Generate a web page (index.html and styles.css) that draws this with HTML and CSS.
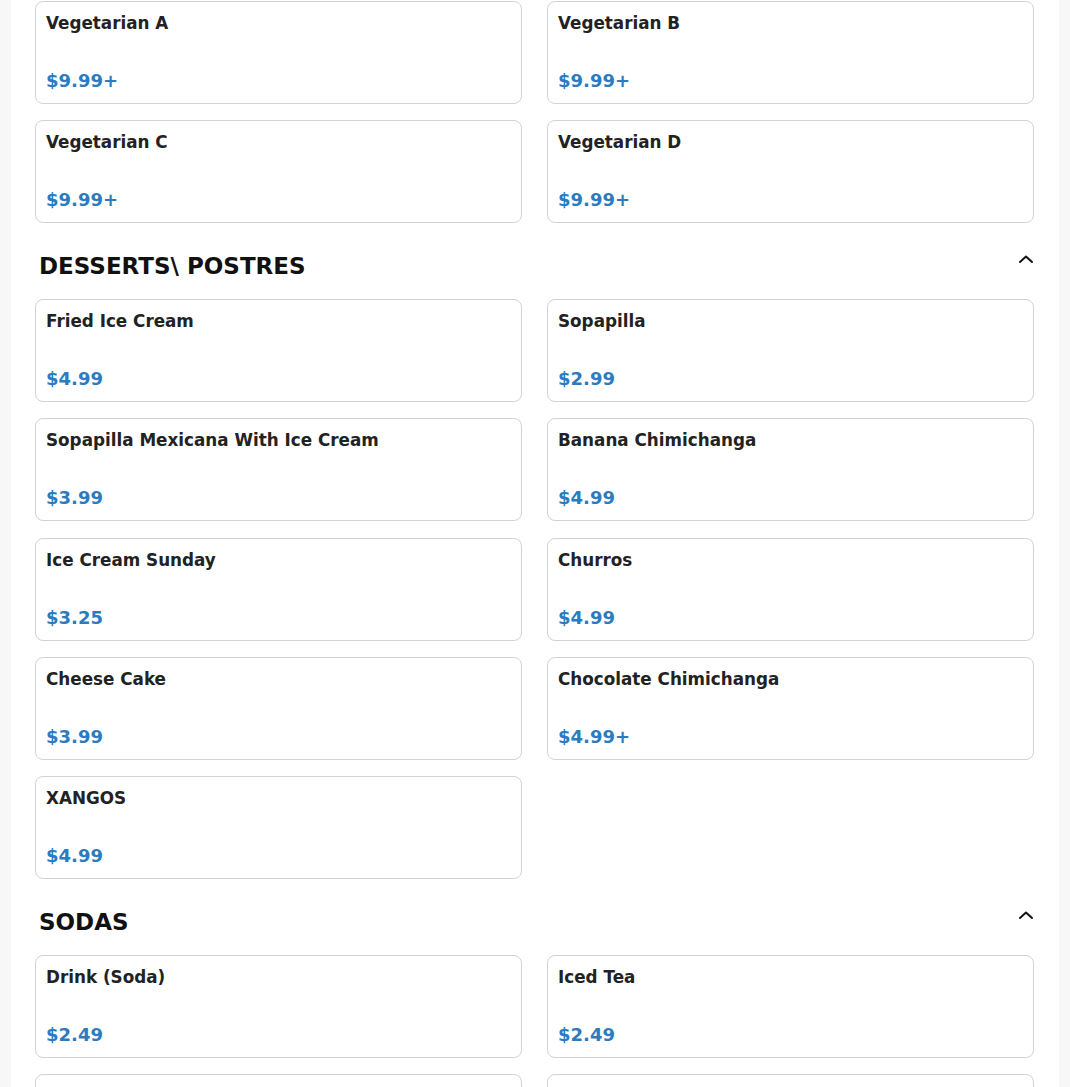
FILE: index.html
```html
<!DOCTYPE html>
<html lang="en">
<head>
<meta charset="utf-8">
<title>Menu</title>
<link rel="stylesheet" href="styles.css">
</head>
<body>
<main class="menu">
  <div class="grid first-grid">
    <div class="card"><div class="title">Vegetarian A</div><div class="price">$9.99+</div></div>
    <div class="card"><div class="title">Vegetarian B</div><div class="price">$9.99+</div></div>
    <div class="card"><div class="title">Vegetarian C</div><div class="price">$9.99+</div></div>
    <div class="card"><div class="title">Vegetarian D</div><div class="price">$9.99+</div></div>
  </div>

  <section class="section">
    <div class="section-head">
      <h2 class="section-title">DESSERTS\ POSTRES</h2>
      <svg class="chevron" width="16" height="12" viewBox="0 0 16 12"><path d="M2 9 L8 3.5 L14 9" fill="none" stroke="#111" stroke-width="2" stroke-linecap="round" stroke-linejoin="round"/></svg>
    </div>
    <div class="grid">
      <div class="card"><div class="title">Fried Ice Cream</div><div class="price">$4.99</div></div>
      <div class="card"><div class="title">Sopapilla</div><div class="price">$2.99</div></div>
      <div class="card"><div class="title">Sopapilla Mexicana With Ice Cream</div><div class="price">$3.99</div></div>
      <div class="card"><div class="title">Banana Chimichanga</div><div class="price">$4.99</div></div>
      <div class="card"><div class="title">Ice Cream Sunday</div><div class="price">$3.25</div></div>
      <div class="card"><div class="title">Churros</div><div class="price">$4.99</div></div>
      <div class="card"><div class="title">Cheese Cake</div><div class="price">$3.99</div></div>
      <div class="card"><div class="title">Chocolate Chimichanga</div><div class="price">$4.99+</div></div>
      <div class="card"><div class="title">XANGOS</div><div class="price">$4.99</div></div>
    </div>
  </section>

  <section class="section">
    <div class="section-head">
      <h2 class="section-title">SODAS</h2>
      <svg class="chevron" width="16" height="12" viewBox="0 0 16 12"><path d="M2 9 L8 3.5 L14 9" fill="none" stroke="#111" stroke-width="2" stroke-linecap="round" stroke-linejoin="round"/></svg>
    </div>
    <div class="grid">
      <div class="card"><div class="title">Drink (Soda)</div><div class="price">$2.49</div></div>
      <div class="card"><div class="title">Iced Tea</div><div class="price">$2.49</div></div>
      <div class="card"><div class="title">Milk</div><div class="price">$2.49</div></div>
      <div class="card"><div class="title">Mexican Coke</div><div class="price">$2.99</div></div>
    </div>
  </section>
</main>
</body>
</html>
```

FILE: styles.css
```css
html, body {
  margin: 0;
  padding: 0;
  background: #f7f7f7;
  font-family: "DejaVu Sans", "Liberation Sans", sans-serif;
}

.menu {
  background: #ffffff;
  margin: 0 11px;
  padding: 1px 25px 0 24px;
  min-height: 1200px;
}

.grid {
  display: grid;
  grid-template-columns: 1fr 1fr;
  column-gap: 25px;
  row-gap: 16.2px;
}

.card {
  border: 1px solid #d2d2d2;
  border-radius: 8px;
  padding: 11px 10px 10px 10px;
  height: 103px;
  box-sizing: border-box;
  background: #fff;
}

.title {
  font-size: 16.8px;
  font-weight: bold;
  line-height: 20px;
  color: #222222;
}

.price {
  margin-top: 37px;
  font-size: 18px;
  font-weight: bold;
  line-height: 21px;
  color: #2c7bc0;
}

.section {
  margin-top: 29px;
}

.section-head {
  display: flex;
  justify-content: space-between;
  align-items: flex-start;
  padding: 0 0 0 4px;
  margin-bottom: 19px;
}

.section-title {
  margin: 0;
  font-size: 23px;
  line-height: 28px;
  font-weight: bold;
  color: #111111;
}

.chevron {
  display: block;
  margin-top: 1px;
  margin-right: 0;
}
```
